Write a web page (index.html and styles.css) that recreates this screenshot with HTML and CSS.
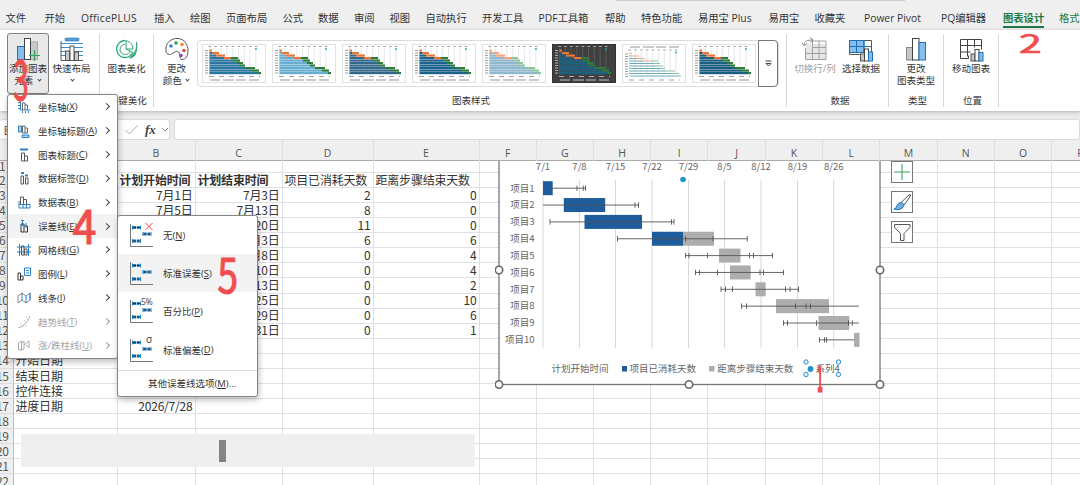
FILE: index.html
```html
<!DOCTYPE html>
<html lang="zh-CN">
<head>
  <meta charset="UTF-8">
  <title>图表设计</title>
  <link rel="stylesheet" href="styles.css">
</head>
<body>
  <div class="app">
    <div class="tabs">
      <span class="search-edge"></span>
      <span>文件</span><span>开始</span><span class="wide">OfficePLUS</span><span>插入</span><span>绘图</span><span>页面布局</span><span>公式</span><span>数据</span><span>审阅</span><span>视图</span><span>自动执行</span><span>开发工具</span><span>PDF工具箱</span><span>帮助</span><span>特色功能</span><span>易用宝 Plus</span><span>易用宝</span><span>收藏夹</span><span>Power Pivot</span><span>PQ编辑器</span><span class="active">图表设计</span><span class="green">格式</span>
    </div>

    <div class="ribbon">
      <div class="group g-layout">
        <div class="tools">
          <button class="tool pressed">
            <svg width="26" height="25" viewBox="0 0 26 25">
              <rect x="2.500" y="9.500" width="7" height="13" fill="#83beec" stroke="#2372b9"/>
              <rect x="15.500" y="5" width="7" height="17.500" fill="#c8c8c8" stroke="#aaa"/>
              <rect x="9.500" y="1.500" width="6" height="21" fill="#fff" stroke="#444"/>
              <path d="M19.500 13v11M14 18.500h11" stroke="#2fa45c" stroke-width="1.200"/>
            </svg>
            <span>添加图表</span>
            <span>元素 <i class="down"></i></span>
          </button>
          <button class="tool quick">
            <svg width="26" height="25" viewBox="0 0 26 25">
              <rect x="6" y="1" width="14" height="3" rx="1" fill="#5a9bd5" stroke="#2372b9" stroke-width=".6"/>
              <path d="M2 6.500h22M2 10.500h22M2 14.500h22M2 18.500h22" stroke="#3b8fcb"/>
              <path d="M2 4v19.500h22" stroke="#555" fill="none"/>
              <rect x="6.500" y="14" width="4" height="9.500" fill="#c8c8c8" stroke="#555"/>
              <rect x="11" y="9" width="4" height="14.500" fill="#fff" stroke="#555"/>
              <rect x="15.500" y="15" width="4" height="8.500" fill="#c8c8c8" stroke="#555"/>
            </svg>
            <span>快速布局</span>
            <span><i class="down"></i></span>
          </button>
        </div>
      </div>
      <div class="group g-beauty">
        <div class="tools">
          <button class="tool">
            <svg width="26" height="25" viewBox="0 0 26 25" fill="none" stroke="#2fa878">
              <path d="M11 3.500a8.500 8.500 0 1 0 8 11.500" stroke-width="1.300"/>
              <path d="M11 7.500a5 5 0 1 0 5 6M12 3v9l6 3M12 4c4 0 7 4 7 8h-7"/>
              <path d="M22.500 5c1 6-1 11-7 16 6 0 8-7 7-16z" fill="#2fa878"/>
            </svg>
            <span>图表美化</span>
          </button>
        </div>
        <div class="group-name">一键美化</div>
      </div>
      <div class="group g-style">
        <div class="tools">
          <button class="tool color">
            <svg width="26" height="25" viewBox="0 0 26 25">
              <path d="M2 14C1 6 7 1 14 1.500s10 7 10 12-2 9-6 9c-3 0-1-5-3.500-7.500S8 18 5.500 17.500 2 16 2 14z" fill="#fff" stroke="#555"/>
              <circle cx="7" cy="9" r="1.800" fill="#2b7cd3"/><circle cx="12" cy="6" r="1.800" fill="#2f9e52"/>
              <circle cx="18" cy="7.500" r="1.800" fill="#f08a24"/><circle cx="20" cy="13.500" r="1.800" fill="#e8483f"/>
              <circle cx="17" cy="18.500" r="1.800" fill="#9a3fb5"/>
            </svg>
            <span>更改</span>
            <span>颜色 <i class="down"></i></span>
          </button>
          <div class="gallery">
            <div class="thumbs" id="thumbs"></div>
            <button class="more">
              <svg width="7" height="7" viewBox="0 0 7 7"><path d="M.5 1h6M1 3.500L3.500 6 6 3.500z" fill="none" stroke="#444"/></svg>
            </button>
          </div>
        </div>
        <div class="group-name">图表样式</div>
      </div>
      <div class="group g-data">
        <div class="tools">
          <button class="tool disabled">
            <svg width="26" height="25" viewBox="0 0 26 25">
              <path d="M4 7h20v15H4z" fill="#e6e6e6"/>
              <path d="M10 4h14v18.500H3.500V11M3.500 16.500H24M10 10.500h14M10.500 4v18M17 4v18" fill="none" stroke="#a0a0a0"/>
              <path d="M2 8c0-4 3-5 9-5M8 .5L11 3 8 5.500M0 6l2.500 3L5 6" fill="none" stroke="#888"/>
            </svg>
            <span>切换行/列</span>
          </button>
          <button class="tool">
            <svg width="26" height="25" viewBox="0 0 26 25">
              <path d="M1.500 3.500h22v14h-22z" fill="#fff" stroke="#555"/>
              <path d="M1.500 3.500h14.500v12H1.500z" fill="#83beec" stroke="#1f6fb5"/>
              <path d="M1.500 9.500h22M8.500 3.500v12M16 3.500v12" fill="none" stroke="#1f6fb5"/>
              <rect x="12.500" y="17" width="4" height="7" fill="#c8c8c8" stroke="#555"/>
              <rect x="16.500" y="12" width="4" height="12" fill="#fff" stroke="#444"/>
              <rect x="20.500" y="15" width="4" height="9" fill="#83beec" stroke="#1f6fb5"/>
            </svg>
            <span>选择数据</span>
          </button>
        </div>
        <div class="group-name">数据</div>
      </div>
      <div class="group g-type">
        <div class="tools">
          <button class="tool">
            <svg width="26" height="25" viewBox="0 0 26 25">
              <rect x="3.500" y="10.500" width="6" height="12.500" fill="#c8c8c8" stroke="#888"/>
              <rect x="9.500" y="1.500" width="6.500" height="21.500" fill="#fff" stroke="#444"/>
              <rect x="16" y="5.500" width="6.500" height="17.500" fill="#83beec" stroke="#2372b9"/>
            </svg>
            <span>更改</span>
            <span>图表类型</span>
          </button>
        </div>
        <div class="group-name">类型</div>
      </div>
      <div class="group g-place">
        <div class="tools">
          <button class="tool">
            <svg width="26" height="25" viewBox="0 0 26 25">
              <path d="M2.500 2.500h21v10M2.500 2.500v19h8v-3M2.500 8.500h21M2.500 15h10M9.500 2.500v17M16.500 2.500v8" fill="none" stroke="#444"/>
              <rect x="13" y="17" width="4" height="7" fill="#c8c8c8" stroke="#555"/>
              <rect x="17" y="12.500" width="4" height="11.500" fill="#fff" stroke="#444"/>
              <rect x="21" y="15.500" width="4" height="8.500" fill="#83beec" stroke="#1f6fb5"/>
            </svg>
            <span>移动图表</span>
          </button>
        </div>
        <div class="group-name">位置</div>
      </div>
    </div>

    <div class="formula-bar">
      <div class="name-box">
        <span class="name">图</span>
        <svg width="13" height="10" viewBox="0 0 13 10"><path d="M.5 5l4 4L12.500 .5" fill="none" stroke="#aaa"/></svg>
        <em>fx</em>
        <svg width="8" height="6" viewBox="0 0 8 6"><path d="M1 1l3 3 3-3" fill="none" stroke="#888"/></svg>
      </div>
      <div class="formula"></div>
    </div>

    <div class="col-heads" id="colHeads"></div>

    <div class="sheet">
      <div id="rows"></div>
      <div class="slider"><div class="knob"></div></div>
      <svg class="chart" id="chart" width="392" height="231" viewBox="495 160 392 231"></svg>
      <div class="chart-buttons">
        <button><svg width="20" height="20" viewBox="0 0 20 20"><path d="M10 2v16M2 10h16" stroke="#3a9b5c"/></svg></button>
        <button><svg width="20" height="20" viewBox="0 0 20 20">
          <path d="M9 10.500L17 3q2-1 1.500 1L12 13z" fill="#fff" stroke="#555"/>
          <path d="M9 10.500q2 .5 3 2.500-1 4-5 4.500-3 .5-5-.5 3-1 3-3.500 1-3 4-3z" fill="#6fb1e4" stroke="#2372b9"/>
        </svg></button>
        <button><svg width="20" height="20" viewBox="0 0 20 20"><path d="M2.500 2.500h15.500v3l-6 6v7H8.500v-7l-6-6z" fill="#fff" stroke="#555"/></svg></button>
      </div>
    </div>

    <div class="menu">
      <div class="item"><svg viewBox="0 0 14 14"><path d="M3.500 2v8h10M1 2.500h2M1 5.500h2M1 8.500h2M5.500 13v-2M8.500 13v-2M11.500 13v-2" stroke="#2b83c6"/><path d="M5.500 10V3h2.500v7M8 5h2.500v5" stroke="#666"/></svg>坐标轴(<u>X</u>)<b></b></div>
      <div class="item"><svg viewBox="0 0 14 14"><path d="M1.500 2h3v6h-3zM5 11h7v2.500H5z" stroke="#2b83c6" fill="#a9d3f2"/><path d="M5.500 9V2H8v7zM8 4h2.500v5H8" stroke="#666"/></svg>坐标轴标题(<u>A</u>)<b></b></div>
      <div class="item"><svg viewBox="0 0 14 14"><path d="M3 1.500h8" stroke="#2b83c6" stroke-width="2"/><path d="M4.500 13V5h3v8zM7.500 8h3v5h-3" stroke="#555"/></svg>图表标题(<u>C</u>)<b></b></div>
      <div class="item"><svg viewBox="0 0 14 14"><path d="M4 2h3M8 4.500h3" stroke="#2b83c6" stroke-width="2"/><path d="M4 13V5h2.500v8zM8.500 13V7H11v6z" stroke="#555"/></svg>数据标签(<u>D</u>)<b></b></div>
      <div class="item"><svg viewBox="0 0 14 14"><path d="M3.500 9V2h3v7M6.500 4.500h3V9" stroke="#555"/><path d="M2 9.500h11v3.500H2zM2 9.500V6M6 9.500V13M9.500 9.500V13" stroke="#2b83c6"/></svg>数据表(<u>B</u>)<b></b></div>
      <div class="item hot"><svg viewBox="0 0 14 14"><path d="M4 13V5h3v8zM7.500 7h3v6h-3" stroke="#333"/><path d="M5.500 1v6M4 1.500h3M9 4v5" stroke="#2b83c6"/></svg>误差线(<u>E</u>)<b></b></div>
      <div class="item"><svg viewBox="0 0 14 14"><path d="M0 4h14M0 9h14M2.500 1v12M11.500 1v12" stroke="#2b83c6"/><path d="M4.500 12V3h2.500v9zM7.500 12V6H10v6z" stroke="#555"/></svg>网格线(<u>G</u>)<b></b></div>
      <div class="item"><svg viewBox="0 0 14 14"><path d="M1 13V6h2.500v7zM3.500 9H6v4H3.500" stroke="#333"/><path d="M7.500 1h6v7.500h-6zM9 3.500h3M9 6h3" stroke="#2b83c6"/></svg>图例(<u>L</u>)<b></b></div>
      <div class="item"><svg viewBox="0 0 14 14"><path d="M1 12V5l4-3 4 3 4-3v7l-4 3-4-3z" stroke="#888"/><path d="M5 2v7M9 5v7M13 2v7" stroke="#2b83c6"/></svg>线条(<u>I</u>)<b></b></div>
      <div class="item off"><svg viewBox="0 0 14 14"><path d="M1 13Q9 11 13 1" stroke="#aaa"/><path d="M3 9h1M7 6h1M9 11h1M5 11h1M9 2h1" stroke="#aaa"/></svg>趋势线(<u>T</u>)<b></b></div>
      <div class="item off"><svg viewBox="0 0 14 14"><path d="M1.500 12V5l3-2v9zM4.500 5L7 3v8l-2.500 1M7 7l5-4v7l-3-3" stroke="#aaa"/></svg>涨/跌柱线(<u>U</u>)<b></b></div>
    </div>

    <div class="submenu">
      <div class="item"><svg viewBox="0 0 24 24"><use href="#errbars"/><path d="M16.500 0l7 7m0-7l-7 7" stroke="#e8483f"/></svg>无(<u>N</u>)</div>
      <div class="item hot"><svg viewBox="0 0 24 24"><use href="#errbars"/></svg>标准误差(<u>S</u>)</div>
      <div class="item"><svg viewBox="0 0 24 24"><use href="#errbars"/><text x="12" y="5.500">5%</text></svg>百分比(<u>P</u>)</div>
      <div class="item"><svg viewBox="0 0 24 24"><use href="#errbars"/><text x="17" y="5" class="sigma">σ</text></svg>标准偏差(<u>D</u>)</div>
      <div class="other">其他误差线选项(<u>M</u>)...</div>
    </div>

    <svg class="defs" width="0" height="0">
      <symbol id="errbars" viewBox="0 0 24 24" overflow="visible">
        <path d="M1.500 1v22.500H24" fill="none" stroke="#777"/>
        <path d="M4 4.500h6.500M14.500 11h6.500M4 18h6.500" stroke="#1d7fc4" stroke-width="3"/>
        <path d="M3.500 4.500h8M14 11h8M3.500 18h8" stroke="#234"/>
        <path d="M3.500 2.500v4M11.500 2.500v4M14 9v4M22 9v4M3.500 16v4M11.500 16v4" stroke="#1d7fc4"/>
        <path d="M7.500 2.500v4M18 9v4M7.500 16v4" stroke="#fff" stroke-width=".7"/>
      </symbol>
    </svg>

    <!-- step numbers -->
    <svg class="steps" width="1080" height="485" viewBox="0 0 1080 485">
      <text class="one" transform="translate(817.500 390.500) scale(.45 1.600)">1</text>
      <text transform="translate(1019 52.500) scale(2.050 1.300)">2</text>
      <text transform="translate(13.500 99.500) scale(1.350 2.650)">3</text>
      <text transform="translate(72.500 244) scale(2.150 2.350)">4</text>
      <text transform="translate(217.500 293) scale(1.850 2.400)">5</text>
    </svg>
  </div>

  <script>
    const colWidths = [13.5, 104, 78, 87, 91, 106, 57.2, 57.2, 57.3, 57.3, 57.3, 57.3, 57.3, 57.3, 57.3, 57.3, 57.3];
    const colNames = ['', 'A', 'B', 'C', 'D', 'E', 'F', 'G', 'H', 'I', 'J', 'K', 'L', 'M', 'N', 'O', 'P'];
    const cells = {
      B2: '计划开始时间', C2: '计划结束时间', D2: '项目已消耗天数', E2: '距离步骤结束天数',
      B3: '7月1日', B4: '7月5日',
      A14: '开始日期', A15: '结束日期', A16: '控件连接', A17: '进度日期', B17: '2026/7/28'
    };
    const ends = ['7月3日', '7月13日', '7月20日', '8月3日', '8月8日', '8月10日', '8月13日', '8月25日', '8月29日', '8月31日'];
    const used = [2, 8, 11, 6, 0, 0, 0, 0, 0, 0];
    const left = [0, 0, 0, 6, 4, 4, 2, 10, 6, 1];
    for (let i = 0; i < 10; i++) {
      cells['C' + (i + 3)] = ends[i];
      cells['D' + (i + 3)] = used[i];
      cells['E' + (i + 3)] = left[i];
    }

    const columns = colWidths.map(w => w + 'px').join(' ');
    const heads = document.getElementById('colHeads');
    heads.style.gridTemplateColumns = columns;
    heads.innerHTML = colNames.map(n => `<span>${n === 'A' ? '' : n}</span>`).join('');

    let rowsHtml = '';
    for (let r = 1; r <= 22; r++) {
      rowsHtml += `<div class="row r${r}" style="grid-template-columns:${columns}"><span class="num">${r}</span>`;
      for (let c = 1; c < colNames.length; c++) {
        const v = cells[colNames[c] + r];
        rowsHtml += `<span class="cell c${colNames[c]}">${v === undefined ? '' : v}</span>`;
      }
      rowsHtml += '</div>';
    }
    document.getElementById('rows').innerHTML = rowsHtml;

    // style gallery: [blue end, orange end, green end] for each bar
    const steps = [[7.5, 10, 10], [10, 17, 17], [14, 23, 23], [22, 29, 36], [31, 31, 38], [35, 35, 41], [38, 38, 43], [43, 43, 53], [50, 50, 57], [56, 56, 59]];
    const looks = [
      { blue: '#2a769f' }, { blue: '#69aed2' }, { blue: '#33688a' }, { blue: '#1b638c' },
      { blue: '#8fb7cf', pale: true }, { blue: '#20607f', dark: true },
      { blue: '#6da9bd', thin: true, pale: true }, { blue: '#1b5f80' }
    ];
    function drawThumb(s) {
      const ink = s.dark ? '#ccc' : '#888';
      const top = s.thin ? 9 : 5.5;
      const h = s.thin ? 1 : 2.2;
      let g = `<svg width="64" height="39" viewBox="0 0 64 39"><rect x=".5" y=".5" width="63" height="38" fill="${s.dark ? '#404040' : '#fff'}" stroke="${s.dark ? '#333' : '#e2e2e2'}"/>`;
      for (let i = 0; i < 9; i++) {
        const x = 7.5 + i * 5.8;
        g += `<path d="M${x} ${top - 1}V30" stroke="${s.dark ? '#666' : '#d8dde4'}" stroke-width=".7"/>`;
        g += `<path d="M${x - 1} ${s.thin ? 6 : 2.5}h2.500" stroke="${ink}" stroke-width=".8"/>`;
      }
      steps.forEach((p, i) => {
        const y = top + i * 2.5;
        g += `<rect x="7.500" y="${y}" width="${p[0] - 7.5}" height="${h}" fill="${s.blue}"/>`;
        g += `<rect x="${p[0]}" y="${y}" width="${p[1] - p[0]}" height="${h}" fill="${s.pale ? '#f0a680' : '#e8763a'}"/>`;
        g += `<rect x="${p[1]}" y="${y}" width="${p[2] - p[1]}" height="${h}" fill="${s.pale ? '#8fc39a' : '#2c7d38'}"/>`;
        g += `<path d="M3 ${y + 1}h3" stroke="${ink}" stroke-width=".8"/>`;
      });
      g += `<path d="M7 ${s.thin ? 36 : 32.5}h51" stroke="${ink}" stroke-width=".8" stroke-dasharray="5 5"/>`;
      g += `<path d="M8 ${s.thin ? 3 : 36}h49" stroke="${ink}" stroke-width=".9" stroke-dasharray="10 3 11 2"/>`;
      g += `<circle cx="54" cy="${s.thin ? 8.5 : 5}" r=".9" fill="#18a0b8"/></svg>`;
      return g;
    }
    document.getElementById('thumbs').innerHTML = looks.map(drawThumb).join('');

    // gantt chart
    const ticks = [['7/1', 543], ['7/8', 579.5], ['7/15', 615.5], ['7/22', 652], ['7/29', 688.5], ['8/5', 724.5], ['8/12', 761], ['8/19', 797.5], ['8/26', 833.7]];
    const tasks = [
      { blue: [543, 552.7], line: [552, 585.5], marks: [577, 583.3, 585.5] },
      { blue: [563.8, 605.2], line: [543, 638.5], marks: [635, 638.5] },
      { blue: [584.5, 642], line: [550, 674], marks: [550, 671.5, 674] },
      { blue: [652, 683], gray: [683, 714], line: [617.5, 747.3], marks: [617.5, 685.5, 713, 747.3] },
      { gray: [719, 740.5], line: [685.5, 772.5], marks: [685.5, 689, 707.5, 749.5, 753.5, 772.5] },
      { gray: [730, 750.7], line: [695.5, 783.5], marks: [695.5, 699.5, 717.5, 760, 763.5, 783.5] },
      { gray: [755.5, 765.7], line: [721, 798.5], marks: [721, 725.5, 732.5, 785.5, 790, 798.5] },
      { gray: [776, 829], line: [741.5, 859], marks: [741.5, 746.5, 795.5, 806, 810.5] },
      { gray: [818.5, 849.3], line: [783.5, 859], marks: [783.5, 787.5, 816.5, 848.5, 852.3] },
      { gray: [854, 859.5], line: [819.5, 854], marks: [819.5, 824.5, 826.5] }
    ];
    let g = '<rect x="499" y="150" width="381" height="234.500" fill="#fff" stroke="#777" stroke-width="1.300"/>';
    ticks.forEach(t => {
      g += `<path d="M${t[1]} 180V348" class="grid"/><text x="${t[1]}" y="169.800" text-anchor="middle">${t[0]}</text>`;
    });
    tasks.forEach((t, i) => {
      const y = 188.2 + i * 16.85;
      g += `<text x="534.500" y="${y + 3.3}" text-anchor="end">项目${i + 1}</text>`;
      if (t.blue) g += `<rect x="${t.blue[0]}" y="${y - 7}" width="${t.blue[1] - t.blue[0]}" height="14" fill="#1e5c9b"/>`;
      if (t.gray) g += `<rect x="${t.gray[0]}" y="${y - 7}" width="${t.gray[1] - t.gray[0]}" height="14" fill="#adadad"/>`;
      g += `<path d="M${t.line[0]} ${y}H${t.line[1]}" class="err"/>`;
      t.marks.forEach(m => g += `<path d="M${m} ${y - 2.7}v5.400" class="err"/>`);
    });
    g += '<circle cx="683" cy="179.500" r="2.800" fill="#1b97cc"/>';
    g += '<text x="551.500" y="372.300">计划开始时间</text>';
    g += '<rect x="622" y="366" width="5" height="5.500" fill="#1e5c9b"/><text x="629.500" y="372.300">项目已消耗天数</text>';
    g += '<rect x="709" y="366" width="5.500" height="5.500" fill="#adadad"/><text x="717.200" y="372.300">距离步骤结束天数</text>';
    g += '<circle cx="810.500" cy="369" r="2.900" fill="#1b97cc"/><text x="815.500" y="372.300">系列4</text>';
    [[806, 362], [838.5, 362], [806, 374.5], [838.5, 374.5]].forEach(p => g += `<circle cx="${p[0]}" cy="${p[1]}" r="2.200" fill="#e6f3fc" stroke="#2f8fd0"/>`);
    [[499, 270], [880, 270], [499, 384.5], [689, 384.5], [880, 384.5]].forEach(p => g += `<circle cx="${p[0]}" cy="${p[1]}" r="3.700" fill="#fff" stroke="#666" stroke-width="1.600"/>`);
    document.getElementById('chart').innerHTML = g;
  </script>
</body>
</html>
```

FILE: styles.css
```css
* {
  box-sizing: border-box;
}

body {
  margin: 0;
  font-family: "Open Sans", "Noto Sans CJK SC", sans-serif;
  font-size: 9.5px;
  color: #333;
}

button {
  font: inherit;
  color: inherit;
  background: none;
  border: none;
  padding: 0;
}

.app {
  position: relative;
  width: 1080px;
  height: 485px;
  overflow: hidden;
  background: #ebebeb;
  display: flex;
  flex-direction: column;
}

/* tabs */
.tabs {
  position: relative;
  flex: none;
  height: 30px;
  padding: 8px 0 0 5.5px;
  background: #efefef;
  display: grid;
  grid-template-columns: 39px 36.5px 73px 36px 36px 56.5px 35.5px 36px 35.5px 36px 56.5px 56.5px 66.5px 36px 57px 70.5px 46px 49.5px 77px 62px 56px 40px;
  font-size: 10.3px;
  line-height: 20px;
  white-space: nowrap;
}

.search-edge {
  position: absolute;
  left: 616px;
  top: 0;
  width: 289px;
  height: 1px;
  background: #ccc;
}

.tabs .wide {
  letter-spacing: 0.3px;
}

.tabs .green,
.tabs .active {
  color: #1a7a46;
}

.tabs .active {
  font-weight: bold;
  width: 41px;
  height: 20px;
  border-bottom: 2px solid #1a7a46;
}

/* ribbon */
.ribbon {
  flex: none;
  height: 81px;
  background: #fff;
  display: flex;
  box-shadow: 0 1px 4px rgba(0, 0, 0, 0.25);
  z-index: 1;
}

.group {
  position: relative;
  height: 73px;
  margin-top: 4px;
  border-right: 1px solid #d8d8d8;
  display: flex;
  flex-direction: column;
  justify-content: space-between;
}

.g-layout { width: 99.5px; padding-left: 7px; }
.g-beauty { width: 54.5px; padding-left: 3px; }
.g-style { width: 633px; padding-left: 2px; }
.g-data { width: 102px; padding-left: 5px; }
.g-type { width: 55px; padding-left: 3px; }
.g-place { width: 55px; padding-left: 3px; }

.tools {
  display: flex;
}

.tool {
  width: 48px;
  height: 61px;
  padding-top: 3px;
  display: flex;
  flex-direction: column;
  align-items: center;
  line-height: 12px;
  white-space: nowrap;
  flex: none;
}

.tool svg {
  display: block;
  margin-bottom: 1px;
}

.pressed {
  width: 42px;
  background: #e9e9e9;
  border: 1px solid #808080;
  border-radius: 3px;
  margin-top: -1px;
}

.quick {
  width: 45px;
}

.disabled {
  color: #a0a0a0;
}

.g-data .tool {
  width: 46px;
}

.color {
  width: 41px;
}

.down {
  display: inline-block;
  width: 3px;
  height: 3px;
  border-right: 1px solid #444;
  border-bottom: 1px solid #444;
  transform: rotate(45deg);
  margin: 0 1px 3px 2px;
}

.group-name {
  text-align: center;
  line-height: 12px;
}

.gallery {
  display: flex;
  width: 582px;
  height: 47px;
  margin-top: 6px;
  border: 1px solid #dcdcdc;
  border-radius: 4px;
}

.thumbs {
  display: flex;
  gap: 6px;
  padding: 3px 0 0 4px;
  width: 561px;
}

.thumbs svg {
  flex: none;
}

.more {
  width: 20px;
  margin: -1px;
  border: 1px solid #777;
  border-radius: 0 4px 4px 0;
}

/* formula bar */
.formula-bar {
  flex: none;
  height: 29px;
  padding-top: 8px;
  display: flex;
  gap: 4px;
}

.name-box,
.formula {
  height: 21px;
  background: #fff;
  border: 1px solid #dadada;
  border-left: none;
  border-radius: 3px;
}

.name-box {
  width: 170px;
  display: flex;
  align-items: center;
}

.name {
  width: 125px;
  padding-left: 4px;
}

.name-box em {
  font: italic bold 13px "Liberation Serif", serif;
  color: #444;
  margin: 0 4px 0 7px;
  width: 12px;
}

.formula {
  flex: 1;
  border-left: 1px solid #dadada;
}

/* sheet */
.col-heads {
  flex: none;
  display: grid;
  height: 21px;
  background: #efefef;
  border-bottom: 1px solid #aaa;
  color: #555;
  font-size: 10.5px;
  line-height: 27px;
  text-align: center;
}

.col-heads span {
  border-right: 1px solid #dedede;
}

.sheet {
  position: relative;
  flex: 1;
  background: #fff;
}

.row {
  display: grid;
  height: 15.09px;
  line-height: 14.5px;
  font-family: "Noto Sans CJK SC", sans-serif;
  font-size: 12px;
  white-space: nowrap;
}

.r1 {
  height: 11.5px;
  line-height: 9px;
}

.num {
  background: #efefef;
  border-right: 1px solid #bbb;
  border-bottom: 1px solid #dcdcdc;
  color: #555;
  padding-right: 8px;
  display: flex;
  justify-content: center;
  letter-spacing: -0.3px;
}

.cell {
  border-right: 1px solid #dfe1e4;
  border-bottom: 1px solid #dfe1e4;
  padding: 0 2px;
  text-align: right;
  letter-spacing: -0.2px;
}

.cA,
.r2 .cell {
  text-align: left;
}

.r2 .cB,
.r2 .cC {
  font-weight: bold;
}

.slider {
  position: absolute;
  left: 20.5px;
  top: 273px;
  width: 454.5px;
  height: 33px;
  background: #efefef;
  padding: 6px 0 0 198px;
}

.knob {
  width: 7px;
  height: 22px;
  background: #848484;
}

.chart {
  position: absolute;
  left: 495px;
  top: -1px;
  font-family: "Noto Sans CJK SC", sans-serif;
  font-size: 9.5px;
  clip-path: inset(1px 0 0 0);
}

.chart text {
  fill: #666;
}

.chart .grid {
  stroke: #d9d9d9;
}

.chart .err {
  stroke: #555;
  stroke-width: 0.9;
}

.chart-buttons {
  position: absolute;
  left: 891px;
  top: 0;
  display: flex;
  flex-direction: column;
  gap: 8px;
}

.chart-buttons button {
  width: 22px;
  height: 22px;
  background: #fff;
  border: 1px solid #777;
}

.chart-buttons svg {
  display: block;
}

/* menus */
.menu,
.submenu {
  position: absolute;
  background: #fff;
  border: 1px solid #858585;
  border-radius: 3px;
  box-shadow: 1px 3px 6px rgba(0, 0, 0, 0.25);
  white-space: nowrap;
  z-index: 2;
}

.menu {
  left: 7px;
  top: 94px;
  width: 111px;
  height: 265px;
}

.item {
  display: flex;
  align-items: center;
}

.menu .item {
  position: relative;
  height: 23.85px;
  padding: 0 0 0 9px;
}

.menu .item svg {
  width: 14px;
  height: 14px;
  margin-right: 7px;
  fill: none;
}

.menu b {
  width: 5px;
  height: 5px;
  border-top: 1px solid #444;
  border-right: 1px solid #444;
  transform: rotate(45deg);
  margin: 0 8px 0 auto;
}

.hot {
  background: #f3f3f3;
}

.off {
  color: #a5a5a5;
}

.menu .off b {
  border-color: #999;
}

.submenu {
  left: 117px;
  top: 215px;
  width: 141px;
  height: 182px;
}

.submenu .item {
  height: 38.2px;
  padding-left: 11px;
}

.submenu .item svg {
  width: 24px;
  height: 24px;
  margin-right: 10px;
  overflow: visible;
}

.submenu text {
  font-size: 8.5px;
  fill: #444;
}

.submenu .sigma {
  font-size: 10px;
}

.other {
  border-top: 1px solid #ddd;
  margin-top: 1.5px;
  padding: 5px 0 0 30px;
  line-height: 15px;
}

.defs {
  position: absolute;
}

.steps {
  position: absolute;
  left: 0;
  top: 0;
  z-index: 3;
  font-family: "Noto Sans CJK SC", sans-serif;
  font-size: 20px;
  pointer-events: none;
}

.steps text {
  fill: #f04e4e;
  stroke: #f04e4e;
  stroke-width: 0.5;
  stroke-linejoin: round;
}

.steps .one {
  stroke-width: 2;
}
```
